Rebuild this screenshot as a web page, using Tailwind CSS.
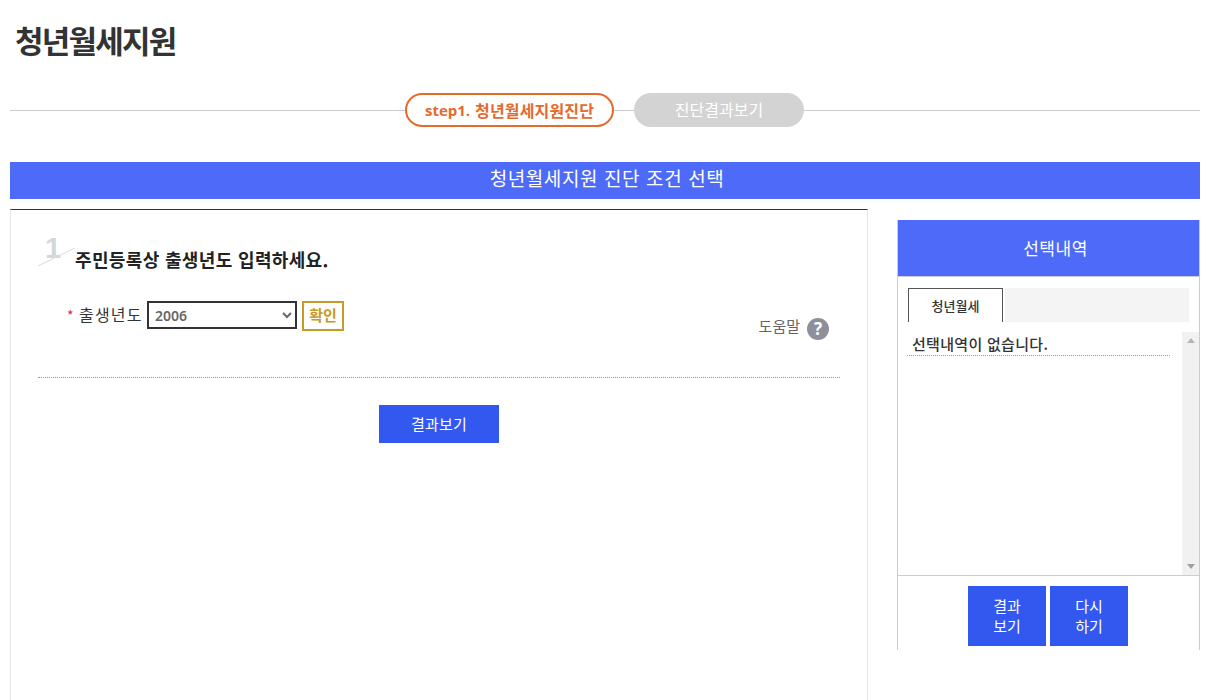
<!DOCTYPE html>
<html lang="ko">
<head>
<meta charset="utf-8">
<title>청년월세지원</title>
<script src="https://cdn.jsdelivr.net/npm/@tailwindcss/browser@4"></script>
</head>
<body class="bg-white h-[700px] overflow-hidden font-['Noto_Sans_CJK_KR','Noto_Sans',sans-serif] text-[#333]">
<div class="ml-[10px] w-[1190px]">
  <!-- page title -->
  <h1 class="h-[93px] pl-[5px] pt-[18px] text-[31px] leading-[44px] font-bold tracking-[-1.75px]">청년월세지원</h1>

  <!-- steps -->
  <div class="flex items-center h-[34px]">
    <div class="w-[395px] h-px bg-[#ccc]"></div>
    <div class="w-[209px] h-[34px] rounded-full border-2 border-[#e56a2c] bg-white flex items-center justify-center text-[16px] font-bold text-[#e56a2c]"><span class="text-[15px] font-['Open_Sans',sans-serif] mr-[5px]">step1.</span><span class="tracking-[0.15px]">청년월세지원진단</span></div>
    <div class="w-[20px] h-px bg-[#ccc]"></div>
    <div class="w-[170px] h-[34px] rounded-full bg-[#d3d3d3] flex items-center justify-center text-[16px] pb-[2px] text-white">진단결과보기</div>
    <div class="flex-1 h-px bg-[#ccc]"></div>
  </div>

  <div class="mt-[35px] h-[37px] bg-[#4d6bf8] flex items-center justify-center text-white text-[19px] tracking-[0.6px] pl-[4px] pb-[4px]">청년월세지원 진단 조건 선택</div>

  <div class="flex mt-[10px]">
    <!-- left panel -->
    <div class="relative w-[858px] h-[491px] border-t border-t-[#333] border-x border-x-[#e5e5e5] pl-[27px] pr-[27px]">
      <svg class="absolute left-[26px] top-[22px] overflow-visible" width="44" height="40" viewBox="0 0 44 40">
        <text x="8" y="26" font-family="Liberation Sans, sans-serif" font-size="29" font-weight="700" fill="#d4d6d8">1</text>
        <path d="M1 34 L38 16" stroke="#d9d9d9" stroke-width="1" fill="none"/>
      </svg>
      <h2 class="relative pt-[36px] pl-[37px] text-[18px] leading-[26px] font-bold text-[#222] tracking-[0.35px]">주민등록상 출생년도 입력하세요.</h2>
      <div class="relative flex h-[77px] mt-[29px] border-b border-dotted border-b-[#999]">
        <div class="flex items-start pl-[29px]">
          <span class="text-[#e0233c] text-[14px] leading-[28px] w-[12px]">*</span>
          <span class="text-[16px] leading-[26px] w-[68px] tracking-[1.2px] text-[#333]">출생년도</span>
          <select class="w-[150px] h-[28px] border-2 border-[#333] bg-white pl-[2px] text-[14px] font-semibold text-[#666] font-['Noto_Sans',sans-serif]">
            <option>2006</option>
          </select>
          <button class="ml-[5px] w-[42px] h-[30px] border-2 border-[#c69a25] pb-[1px] text-[15px] font-bold text-[#c69a25] bg-white">확인</button>
        </div>
        <div class="ml-auto flex items-start pt-[15px] pr-[11px]">
          <span class="text-[15px] leading-[20px] text-[#666]">도움말</span>
          <span class="ml-[7px] mt-[2px] w-[22px] h-[22px] rounded-full bg-[#8f8f9c] flex items-center justify-center text-white text-[17px] font-bold font-['Noto_Sans',sans-serif]">?</span>
        </div>
      </div>
      <div class="flex justify-center mt-[27px]">
        <button class="w-[120px] h-[38px] bg-[#3358f0] text-white text-[15px] tracking-[0.2px]">결과보기</button>
      </div>
    </div>

    <!-- right panel -->
    <div class="ml-[29px] mt-[11px] w-[303px] h-[430px] border-x border-x-[#ccc] flex flex-col">
      <div class="h-[56px] shrink-0 bg-[#4d6bf8] flex items-center justify-center pl-[14px] text-white text-[17px] tracking-[0.5px]">선택내역</div>
      <div class="h-[300px] shrink-0 border-y border-y-[#ccc] pt-[11px] flex flex-col">
        <div class="flex h-[34px] mx-[10px] shrink-0">
          <div class="w-[95px] border-t border-x border-[#555] flex items-center justify-center text-[13px] font-medium text-[#333]">청년월세</div>
          <div class="flex-1 ml-[2px] bg-[#f4f4f4]"></div>
        </div>
        <div class="flex flex-1 mt-[10px] min-h-0">
          <div class="flex-1 pl-[9px] pr-[12px]">
            <p class="h-[24px] pl-[5px] text-[15px] leading-[24px] font-medium text-[#333] tracking-[0.3px] border-b border-dotted border-b-[#999]">선택내역이 없습니다.</p>
          </div>
          <div class="w-[17px] bg-[#f1f1f1] flex flex-col items-center justify-between py-[6px]">
            <svg width="8" height="5" viewBox="0 0 8 5"><path d="M4 0 L8 5 H0 Z" fill="#b5b5b5"/></svg>
            <svg width="8" height="5" viewBox="0 0 8 5"><path d="M0 0 H8 L4 5 Z" fill="#a0a0a0"/></svg>
          </div>
        </div>
      </div>
      <div class="flex justify-center gap-[4px] pt-[10px] pr-[1px]">
        <button class="w-[78px] h-[60px] bg-[#3358f0] text-white text-[15px] leading-[20px]">결과<br>보기</button>
        <button class="w-[78px] h-[60px] bg-[#3358f0] text-white text-[15px] leading-[20px]">다시<br>하기</button>
      </div>
    </div>
  </div>
</div>
</body>
</html>
